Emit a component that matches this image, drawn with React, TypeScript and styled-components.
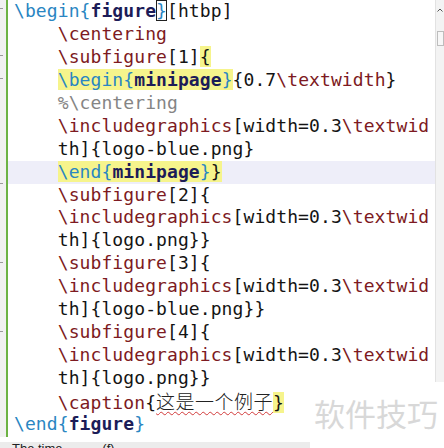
import React from "react";
import styled, { createGlobalStyle, css } from "styled-components";

const Global = createGlobalStyle`
  html, body { margin: 0; padding: 0; background: #ffffff; overflow: hidden; }
  #root { width: 444px; height: 448px; }
`;

const Frame = styled.div`
  position: relative;
  width: 444px;
  height: 448px;
  display: flex;
  flex-direction: column;
  background: #ffffff;
  overflow: hidden;
`;

const Main = styled.div`
  display: flex;
  flex-direction: row;
  height: 437px;
`;

const Gutter = styled.div`
  width: 6px;
  background: #f1f1f1;
  display: flex;
  flex-direction: column;
`;

const GutterCell = styled.div<{ $tick?: number }>`
  position: relative;
  height: 22.94px;
  flex: none;
  ${(p) =>
    p.$tick !== undefined &&
    css`
      &::after {
        content: "";
        position: absolute;
        left: 0;
        top: ${p.$tick}px;
        width: 3px;
        height: 1px;
        background: #9a9a9a;
      }
    `}
`;

const GreenBar = styled.div`
  width: 2px;
  background: #6db344;
`;

const Editor = styled.div`
  flex: 1;
  min-width: 0;
  display: flex;
  flex-direction: column;
  font-family: "DejaVu Sans Mono", "Liberation Mono", monospace;
  font-size: 18px;
  letter-spacing: 0.09px;
  color: #111111;
`;

const Row = styled.div<{ $indent: number; $current?: boolean }>`
  height: 22.94px;
  line-height: 22.94px;
  white-space: pre;
  padding-left: ${(p) => 6 + p.$indent * 10.93}px;
  background: ${(p) => (p.$current ? "#eeeef9" : "transparent")};
  flex: none;
`;

const Cmd = styled.span`
  color: #7d1a22;
`;
const Key = styled.span`
  color: #2a86c2;
`;
const Env = styled.span`
  color: #1c1c58;
  font-weight: bold;
`;
const Plain = styled.span`
  color: #141414;
`;
const Comment = styled.span`
  color: #858585;
`;
const Hl = styled.span`
  background: #f6f48c;
`;
const Caret = styled.span`
  outline: 1px solid #202020;
  outline-offset: -1px;
`;
const Zh = styled.span`
  font-family: "Noto Sans CJK SC", sans-serif;
  font-size: 19px;
  font-weight: 300;
  letter-spacing: 0.5px;
  color: #222222;
  text-decoration: underline wavy #d23a3a;
  text-decoration-thickness: 1px;
  text-underline-offset: 2px;
`;

const ScrollTrack = styled.div`
  width: 8px;
  height: 382px;
  background: #f3f3f3;
  border-left: 1px solid #e2e2e2;
  display: flex;
  flex-direction: column;
  align-items: center;
`;

const ScrollArrow = styled.div`
  height: 31px;
  display: flex;
  align-items: flex-start;
  padding-top: 8px;
  box-sizing: border-box;
  color: #555;
`;

const Thumb = styled.div`
  width: 7px;
  height: 15px;
  background: #f7f7f7;
  border: 1px solid #bdbdbd;
  box-sizing: border-box;
`;

const Status = styled.div`
  height: 11px;
  display: flex;
  align-items: flex-end;
`;

const StatusBar = styled.div`
  width: 310px;
  height: 6px;
  background: #ececec;
  overflow: hidden;
  font-family: "Liberation Sans", sans-serif;
  font-size: 13px;
  line-height: 13px;
  color: #222;
  padding-left: 12px;
  box-sizing: border-box;
  white-space: pre;
`;

const Watermark = styled.div`
  position: absolute;
  left: 314px;
  top: 396px;
  font-family: "Noto Sans CJK SC", sans-serif;
  font-size: 31px;
  line-height: 34px;
  color: #d8d8d8;
`;

const IncludeRow = () => (
  <Row $indent={4}>
    <Cmd>\includegraphics</Cmd>
    <Plain>[width=0.3</Plain>
    <Cmd>\textwid</Cmd>
  </Row>
);

const ticks: Record<number, number> = { 0: 8, 2: 9, 3: 9, 7: 22, 11: 10, 14: 10 };

export default function App() {
  return (
    <Frame>
      <Global />
      <Main>
        <Gutter>
          {Array.from({ length: 19 }).map((_, i) => (
            <GutterCell key={i} $tick={ticks[i]} />
          ))}
        </Gutter>
        <GreenBar />
        <Editor>
          <Row $indent={0}>
            <Key>\begin{"{"}</Key>
            <Env>figure</Env>
            <Caret>
              <Key>{"}"}</Key>
            </Caret>
            <Plain>[htbp]</Plain>
          </Row>
          <Row $indent={4}>
            <Cmd>\centering</Cmd>
          </Row>
          <Row $indent={4}>
            <Cmd>\subfigure</Cmd>
            <Plain>[1]</Plain>
            <Hl>
              <Plain>{"{"}</Plain>
            </Hl>
          </Row>
          <Row $indent={4}>
            <Hl>
              <Key>\begin{"{"}</Key>
              <Env>minipage</Env>
              <Key>{"}"}</Key>
            </Hl>
            <Plain>{"{0.7"}</Plain>
            <Cmd>\textwidth</Cmd>
            <Plain>{"}"}</Plain>
          </Row>
          <Row $indent={4}>
            <Comment>%\centering</Comment>
          </Row>
          <IncludeRow />
          <Row $indent={4}>
            <Plain>{"th]{logo-blue.png}"}</Plain>
          </Row>
          <Row $indent={4} $current>
            <Hl>
              <Key>\end{"{"}</Key>
              <Env>minipage</Env>
              <Key>{"}"}</Key>
              <Plain>{"}"}</Plain>
            </Hl>
          </Row>
          <Row $indent={4}>
            <Cmd>\subfigure</Cmd>
            <Plain>{"[2]{"}</Plain>
          </Row>
          <IncludeRow />
          <Row $indent={4}>
            <Plain>{"th]{logo.png}}"}</Plain>
          </Row>
          <Row $indent={4}>
            <Cmd>\subfigure</Cmd>
            <Plain>{"[3]{"}</Plain>
          </Row>
          <IncludeRow />
          <Row $indent={4}>
            <Plain>{"th]{logo-blue.png}}"}</Plain>
          </Row>
          <Row $indent={4}>
            <Cmd>\subfigure</Cmd>
            <Plain>{"[4]{"}</Plain>
          </Row>
          <IncludeRow />
          <Row $indent={4}>
            <Plain>{"th]{logo.png}}"}</Plain>
          </Row>
          <Row $indent={4}>
            <Cmd>\caption</Cmd>
            <Plain>{"{"}</Plain>
            <Zh>这是一个例子</Zh>
            <Hl>
              <Plain>{"}"}</Plain>
            </Hl>
          </Row>
          <Row $indent={0}>
            <Key>\end{"{"}</Key>
            <Env>figure</Env>
            <Key>{"}"}</Key>
          </Row>
        </Editor>
        <ScrollTrack>
          <ScrollArrow>
            <svg width="6" height="4" viewBox="0 0 6 4">
              <path d="M0.5 3.5 L3 1 L5.5 3.5" stroke="#555" strokeWidth="1" fill="none" />
            </svg>
          </ScrollArrow>
          <Thumb />
        </ScrollTrack>
      </Main>
      <Status>
        <StatusBar>{"The time ...       (f)"}</StatusBar>
      </Status>
      <Watermark>软件技巧</Watermark>
    </Frame>
  );
}
